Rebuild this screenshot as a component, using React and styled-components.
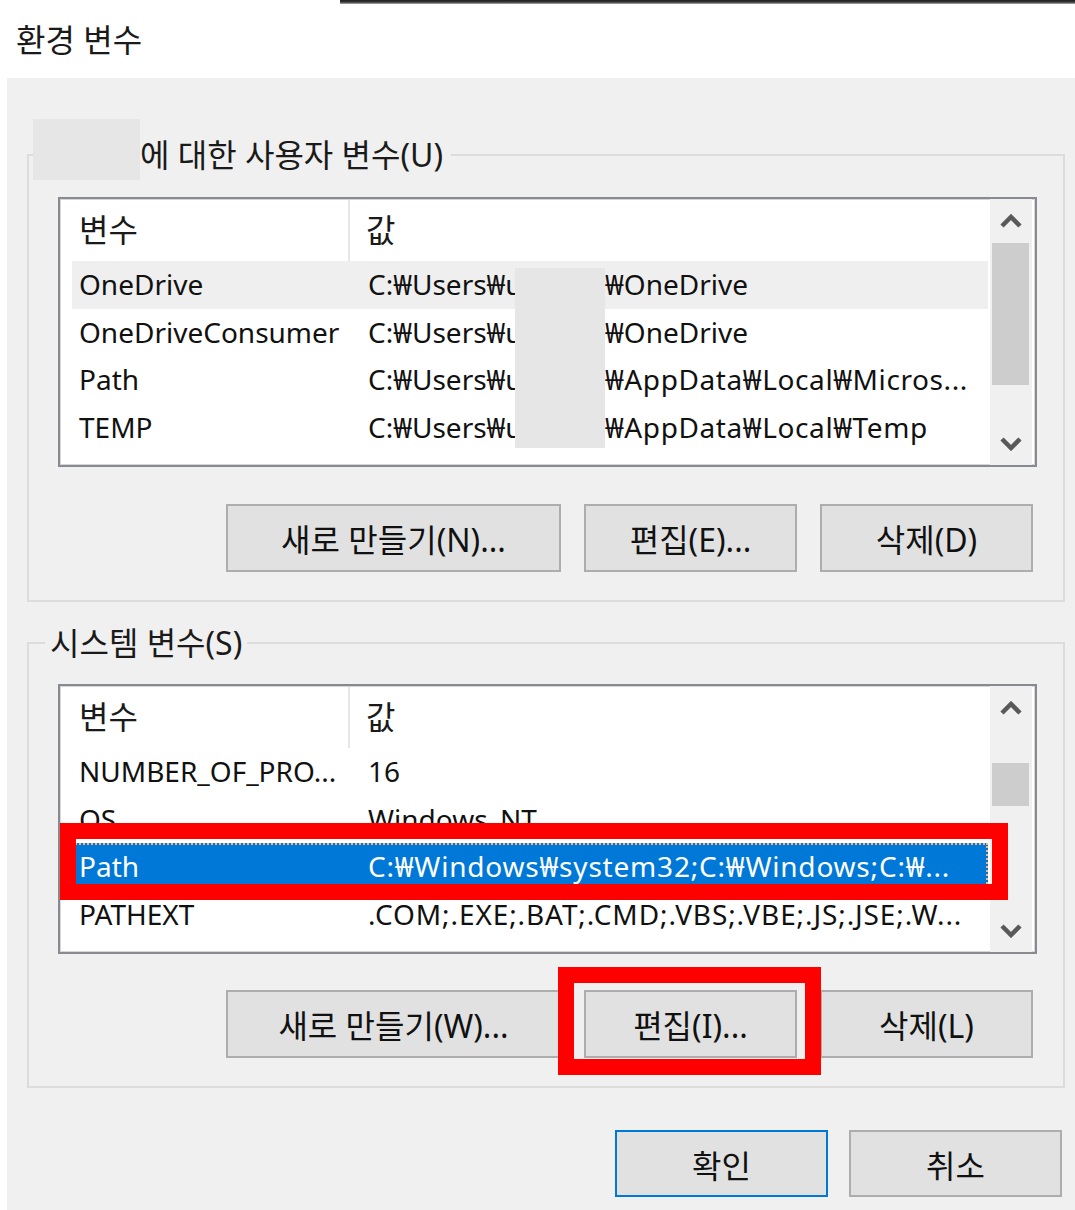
import React from 'react';
import styled, { createGlobalStyle } from 'styled-components';

const GlobalStyle = createGlobalStyle`
  html, body { margin: 0; padding: 0; background: #ffffff; }
  body {
    font-family: "Noto Sans", "Noto Sans CJK KR", sans-serif;
    color: #111111;
  }
  * { box-sizing: border-box; }
`;

const Window = styled.div`
  width: 1075px;
  height: 1210px;
  display: flex;
  flex-direction: column;
  background: #ffffff;
  overflow: hidden;
`;

const TopEdge = styled.div`
  height: 4px;
  margin-left: 340px;
  background: linear-gradient(#1c1c1c, #3c3c3c 55%, #b5b5b5);
`;

const TitleBar = styled.div`
  height: 74px;
  display: flex;
  align-items: center;
  padding: 0 0 6px 16px;
  font-size: 32px;
  color: #1a1a1a;
`;

const Panel = styled.div`
  flex: 1;
  margin-left: 7px;
  background: #f0f0f0;
  padding: 0 10px 0 20px;
  display: flex;
  flex-direction: column;
`;

const GroupBox = styled.fieldset`
  margin: ${(p) => p.$top}px 0 0;
  padding: 0;
  min-width: 0;
  border: 2px solid #dcdcdc;
`;

const Legend = styled.legend`
  display: flex;
  align-items: flex-end;
  height: 50px;
  margin-left: ${(p) => p.$ml}px;
  padding: 0 ${(p) => p.$pr}px 0 ${(p) => p.$pl}px;
  font-size: 32px;
  line-height: 50px;
  color: #1a1a1a;
  white-space: nowrap;
`;

const NameMask = styled.span`
  display: block;
  width: 107px;
  height: 61px;
  margin-top: -11px;
  background: #e6e6e6;
`;

const GroupInner = styled.div`
  padding: ${(p) => p.$pt}px 26px 28px 29px;
  display: flex;
  flex-direction: column;
`;

const ListView = styled.div`
  position: relative;
  height: 270px;
  background: #ffffff;
  border: 2px solid #878a90;
  box-shadow: inset 0 0 0 1px #d6d6d6;
  display: flex;
  overflow: hidden;
`;

const ListBody = styled.div`
  flex: 1;
  min-width: 0;
  padding: 0 2px 0 12px;
  display: flex;
  flex-direction: column;
`;

const HeaderRow = styled.div`
  display: flex;
  height: 62px;
  flex-shrink: 0;
  padding-top: 1px;
`;

const HeaderCell = styled.div`
  display: flex;
  align-items: center;
  padding-bottom: 6px;
  font-size: 32px;
  color: #1a1a1a;
  ${(p) =>
    p.$first
      ? `width: 278px; padding-left: 7px; border-right: 2px solid #e6e6e6;`
      : `flex: 1; padding-left: 16px;`}
`;

const Row = styled.div`
  display: grid;
  grid-template-columns: 288px 1fr;
  height: 47.5px;
  flex-shrink: 0;
  font-size: 28px;
  line-height: 47.5px;
  white-space: nowrap;
  background: ${(p) =>
    p.$state === 'selected' ? '#0078d7' : p.$state === 'hover' ? '#efefef' : 'transparent'};
  color: ${(p) => (p.$state === 'selected' ? '#ffffff' : '#111111')};
  ${(p) =>
    p.$state === 'selected' &&
    `outline: 2px dotted #f3b77a; outline-offset: -2px;`}
`;

const Cell = styled.div`
  overflow: hidden;
  padding-left: ${(p) => (p.$value ? 8 : 7)}px;
  letter-spacing: ${(p) => p.$ls || 0}px;
`;

const Prefix = styled.span`
  display: inline-block;
  width: 237px;
  overflow: hidden;
  vertical-align: top;
  letter-spacing: 0;
`;

const Mask = styled.div`
  position: absolute;
  left: ${(p) => p.$x}px;
  top: ${(p) => p.$y}px;
  width: ${(p) => p.$w}px;
  height: ${(p) => p.$h}px;
  background: #e6e6e6;
`;

const ScrollBar = styled.div`
  width: 42px;
  margin-right: 3px;
  background: #f0f0f0;
  display: flex;
  flex-direction: column;
  flex-shrink: 0;
`;

const ScrollArrow = styled.div`
  height: 44px;
  display: flex;
  align-items: center;
  justify-content: center;
  flex-shrink: 0;
`;

const ScrollTrack = styled.div`
  flex: 1;
  padding: 0 3px 0 2px;
`;

const Thumb = styled.div`
  margin-top: ${(p) => p.$top}px;
  height: ${(p) => p.$h}px;
  background: #cdcdcd;
`;

const ButtonRow = styled.div`
  display: flex;
  justify-content: flex-end;
  gap: 23px;
  margin: ${(p) => p.$top}px 4px 0 0;
`;

const Button = styled.button`
  position: relative;
  width: ${(p) => p.$w}px;
  height: ${(p) => p.$h || 68}px;
  padding: 0;
  background: #e1e1e1;
  border: 2px solid ${(p) => (p.$default ? '#0078d7' : '#adadad')};
  font-family: "Noto Sans", "Noto Sans CJK KR", sans-serif;
  font-size: 32px;
  color: #111111;
  white-space: nowrap;
`;

const Highlight = styled.span`
  position: absolute;
  display: block;
  left: ${(p) => p.$x}px;
  top: ${(p) => p.$y}px;
  width: ${(p) => p.$w}px;
  height: ${(p) => p.$h}px;
  border: 16px solid #ff0000;
  z-index: 2;
  pointer-events: none;
`;

const Footer = styled.div`
  display: flex;
  justify-content: flex-end;
  gap: 21px;
  margin: 42px 3px 0 0;
`;

const Chevron = ({ down }) => (
  <svg width="24" height="15" viewBox="0 0 24 15">
    <polyline
      points={down ? '3,3 12,12 21,3' : '3,12 12,3 21,12'}
      fill="none"
      stroke="#595959"
      strokeWidth="4.5"
    />
  </svg>
);

const Scroller = ({ top, h }) => (
  <ScrollBar>
    <ScrollArrow>
      <Chevron />
    </ScrollArrow>
    <ScrollTrack>
      <Thumb $top={top} $h={h} />
    </ScrollTrack>
    <ScrollArrow>
      <Chevron down />
    </ScrollArrow>
  </ScrollBar>
);

const userRows = [
  { name: 'OneDrive', pre: 'C:₩Users₩user', rest: '₩OneDrive', state: 'hover', ls: 0 },
  { name: 'OneDriveConsumer', pre: 'C:₩Users₩user', rest: '₩OneDrive', ls: 0 },
  { name: 'Path', pre: 'C:₩Users₩user', rest: '₩AppData₩Local₩Micros...', ls: 0.6 },
  { name: 'TEMP', pre: 'C:₩Users₩user', rest: '₩AppData₩Local₩Temp', ls: 0.6 },
];

const systemRows = [
  { name: 'NUMBER_OF_PRO...', value: '16', ls: 0 },
  { name: 'OS', value: 'Windows_NT', ls: 0 },
  { name: 'Path', value: 'C:₩Windows₩system32;C:₩Windows;C:₩...', state: 'selected', ls: 0.8 },
  { name: 'PATHEXT', value: '.COM;.EXE;.BAT;.CMD;.VBS;.VBE;.JS;.JSE;.W...', ls: 0.9 },
];

const Header = () => (
  <HeaderRow>
    <HeaderCell $first>변수</HeaderCell>
    <HeaderCell>값</HeaderCell>
  </HeaderRow>
);

export default function App() {
  return (
    <>
      <GlobalStyle />
      <Window>
        <TopEdge />
        <TitleBar>환경 변수</TitleBar>
        <Panel>
          <GroupBox $top={52}>
            <Legend $ml={4} $pl={0} $pr={8}>
              <NameMask />
              에 대한 사용자 변수(U)
            </Legend>
            <GroupInner $pt={17}>
              <ListView>
                <ListBody>
                  <Header />
                  {userRows.map((r) => (
                    <Row key={r.name} $state={r.state}>
                      <Cell>{r.name}</Cell>
                      <Cell $value $ls={r.ls}>
                        <Prefix>{r.pre}</Prefix>
                        {r.rest}
                      </Cell>
                    </Row>
                  ))}
                </ListBody>
                <Scroller top={0} h={142} />
                <Mask $x={455} $y={69} $w={90} $h={180} />
              </ListView>
              <ButtonRow $top={37}>
                <Button $w={335}>새로 만들기(N)...</Button>
                <Button $w={213}>편집(E)...</Button>
                <Button $w={213}>삭제(D)</Button>
              </ButtonRow>
            </GroupInner>
          </GroupBox>

          <GroupBox $top={16}>
            <Legend $ml={16} $pl={5} $pr={5}>
              시스템 변수(S)
            </Legend>
            <GroupInner $pt={16}>
              <ListView>
                <ListBody>
                  <Header />
                  {systemRows.map((r) => (
                    <Row key={r.name} $state={r.state}>
                      <Cell>{r.name}</Cell>
                      <Cell $value $ls={r.ls}>
                        {r.value}
                      </Cell>
                    </Row>
                  ))}
                </ListBody>
                <Scroller top={33} h={43} />
                <Highlight $x={0} $y={137} $w={948} $h={77} />
              </ListView>
              <ButtonRow $top={36}>
                <Button $w={335}>새로 만들기(W)...</Button>
                <Button $w={213}>
                  편집(I)...
                  <Highlight $x={-28} $y={-25} $w={263} $h={108} />
                </Button>
                <Button $w={213}>삭제(L)</Button>
              </ButtonRow>
            </GroupInner>
          </GroupBox>

          <Footer>
            <Button $w={213} $h={67} $default>
              확인
            </Button>
            <Button $w={213} $h={67}>
              취소
            </Button>
          </Footer>
        </Panel>
      </Window>
    </>
  );
}
